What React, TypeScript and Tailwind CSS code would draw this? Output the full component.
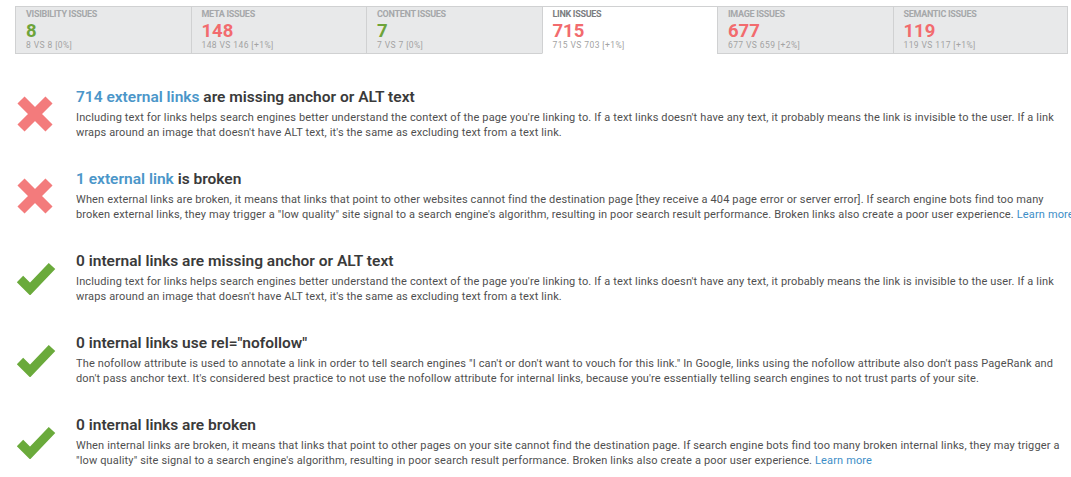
import type { ReactNode } from "react";

type Tab = {
  label: string;
  value: string;
  sub: string;
  good: boolean;
  active?: boolean;
};

const tabs: Tab[] = [
  { label: "VISIBILITY ISSUES", value: "8", sub: "8 VS 8 [0%]", good: true },
  { label: "META ISSUES", value: "148", sub: "148 VS 146 [+1%]", good: false },
  { label: "CONTENT ISSUES", value: "7", sub: "7 VS 7 [0%]", good: true },
  { label: "LINK ISSUES", value: "715", sub: "715 VS 703 [+1%]", good: false, active: true },
  { label: "IMAGE ISSUES", value: "677", sub: "677 VS 659 [+2%]", good: false },
  { label: "SEMANTIC ISSUES", value: "119", sub: "119 VS 117 [+1%]", good: false },
];

const MISSING_TEXT = [
  "Including text for links helps search engines better understand the context of the page you're linking to. If a text links doesn't have any text, it probably means the link is invisible to the user. If a link",
  "wraps around an image that doesn't have ALT text, it's the same as excluding text from a text link.",
];

function LearnMore() {
  return <span className="text-[#3d8ec7]">Learn more</span>;
}

function CrossIcon() {
  return (
    <svg width="38" height="38" viewBox="0 0 38 38">
      <path d="M5 5 L33 33 M33 5 L5 33" stroke="#f37b7c" strokeWidth="10" fill="none" />
    </svg>
  );
}

function CheckIcon() {
  return (
    <svg width="40" height="34" viewBox="0 0 40 34">
      <polyline
        points="4,18 14,28 36,5"
        stroke="#6aaa3b"
        strokeWidth="9"
        fill="none"
        strokeLinejoin="miter"
      />
    </svg>
  );
}

function Issue({
  ok,
  title,
  lines,
}: {
  ok: boolean;
  title: ReactNode;
  lines: ReactNode[];
}) {
  return (
    <div className="flex items-center">
      <div className="w-[76px] shrink-0 pl-[16px] flex items-center">
        {ok ? <CheckIcon /> : <CrossIcon />}
      </div>
      <div className="whitespace-nowrap">
        <div className="text-[15.5px] leading-[20px] font-semibold text-[#3a3a3a]">
          {title}
        </div>
        <div className="mt-[3px] text-[11px] leading-[15px] text-[#4f4f4f] tracking-[0.14px]">
          {lines.map((l, i) => (
            <div key={i}>{l}</div>
          ))}
        </div>
      </div>
    </div>
  );
}

export default function App() {
  return (
    <div className="w-[1071px] h-[477px] bg-white overflow-hidden font-['Roboto',sans-serif]">
      {/* tabs */}
      <div className="pt-[6px] pl-[15px] pr-[3px]">
        <div className="grid grid-cols-6">
          {tabs.map((t, i) => (
            <div
              key={t.label}
              className={`border-t border-l border-[#d0d1d2] px-[10px] pt-[2px] pb-[3px] ${
                i === tabs.length - 1 ? "border-r" : ""
              } ${t.active ? "bg-white border-b border-b-white" : "bg-[#e8e9ea] border-b"}`}
            >
              <div
                className={`text-[9px] leading-[11px] font-bold tracking-[-0.3px] ${
                  t.active ? "text-[#7b7d7f]" : "text-[#a5a7a9]"
                }`}
              >
                {t.label}
              </div>
              <div
                className={`mt-[2px] text-[18.5px] leading-[18px] font-bold ${
                  t.good ? "text-[#6ea43a]" : "text-[#f26b6e]"
                }`}
              >
                {t.value}
              </div>
              <div className="mt-[1px] text-[8.5px] leading-[9px] tracking-[0.4px] text-[#a3a3a3]">
                {t.sub}
              </div>
            </div>
          ))}
        </div>
      </div>

      {/* issues */}
      <div className="mt-[33px] flex flex-col gap-[29px]">
        <Issue
          ok={false}
          title={
            <>
              <span className="text-[#4b96c9]">714 external links</span> are missing anchor or ALT text
            </>
          }
          lines={MISSING_TEXT}
        />
        <Issue
          ok={false}
          title={
            <>
              <span className="text-[#4b96c9]">1 external link</span> is broken
            </>
          }
          lines={[
            "When external links are broken, it means that links that point to other websites cannot find the destination page [they receive a 404 page error or server error]. If search engine bots find too many",
            <>
              broken external links, they may trigger a "low quality" site signal to a search engine's algorithm, resulting in poor search result performance. Broken links also create a poor user experience.{" "}
              <LearnMore />
            </>,
          ]}
        />
        <Issue ok title="0 internal links are missing anchor or ALT text" lines={MISSING_TEXT} />
        <Issue
          ok
          title={'0 internal links use rel="nofollow"'}
          lines={[
            "The nofollow attribute is used to annotate a link in order to tell search engines \"I can't or don't want to vouch for this link.\" In Google, links using the nofollow attribute also don't pass PageRank and",
            "don't pass anchor text. It's considered best practice to not use the nofollow attribute for internal links, because you're essentially telling search engines to not trust parts of your site.",
          ]}
        />
        <Issue
          ok
          title="0 internal links are broken"
          lines={[
            "When internal links are broken, it means that links that point to other pages on your site cannot find the destination page. If search engine bots find too many broken internal links, they may trigger a",
            <>
              "low quality" site signal to a search engine's algorithm, resulting in poor search result performance. Broken links also create a poor user experience. <LearnMore />
            </>,
          ]}
        />
      </div>
    </div>
  );
}
